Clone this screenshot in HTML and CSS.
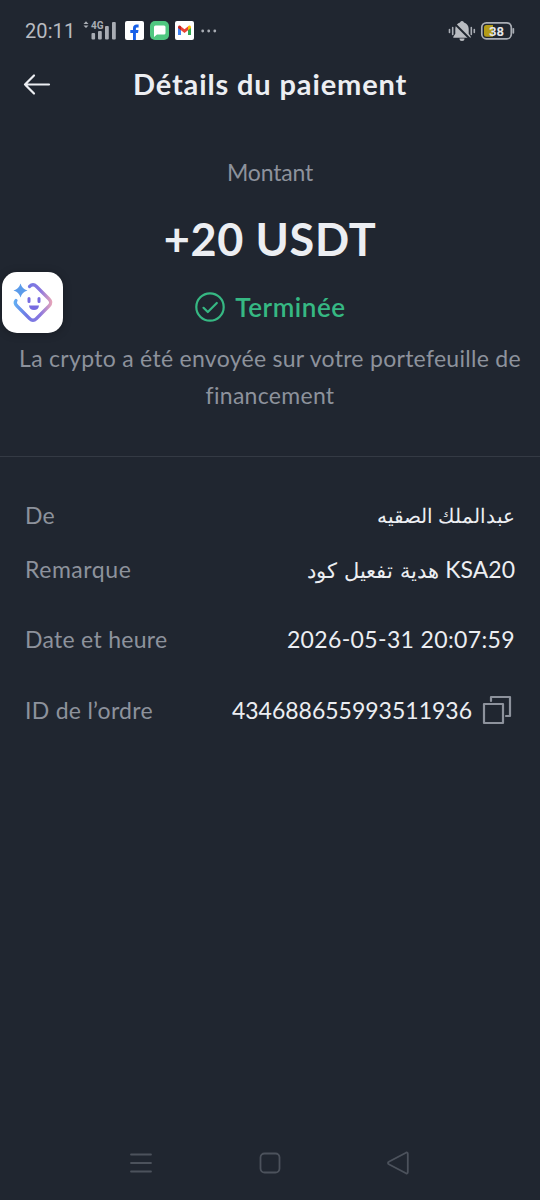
FILE: index.html
```html
<!DOCTYPE html>
<html lang="fr">
<head>
<meta charset="utf-8">
<title>Détails du paiement</title>
<link rel="stylesheet" href="styles.css">
</head>
<body>
<div class="screen">
  <div class="status">
    <span class="clock">20:11</span>
    <svg class="signal" width="34" height="22" viewBox="0 0 34 22" fill="#a9adb4">
      <path d="M3 1.200 5.500 4H.5zM3 8 .5 5.400h5z"/>
      <text x="8" y="9" class="net">4G</text>
      <rect x="8.500" y="13" width="3.600" height="6.500" rx="1"/><rect x="15" y="11" width="3.800" height="8.500" rx="1"/><rect x="22" y="6" width="3.800" height="13.500" rx="1"/><rect x="29" y="2" width="3.800" height="17.500" rx="1"/>
    </svg>
    <svg class="app" width="19" height="19" viewBox="0 0 19 19"><rect width="19" height="19" rx="2" fill="#fff"/><path d="M8 19v-7H5.300V9H8V7.300C8 4.800 9.500 3.600 11.600 3.600h2v2.800h-1.300c-1 0-1.400.5-1.400 1.300V9h2.600l-.5 3h-2.100v7z" fill="#1760e8"/></svg>
    <svg class="app" width="19" height="19" viewBox="0 0 19 19"><rect width="19" height="19" rx="5" fill="#4fc780"/><path d="M5.500 4.500h8.500a1.500 1.500 0 0 1 1.500 1.500v6a1.500 1.500 0 0 1-1.500 1.500H7L4 16V6a1.500 1.500 0 0 1 1.500-1.500z" fill="#fff"/></svg>
    <svg class="app" width="19" height="19" viewBox="0 0 19 19"><rect width="19" height="19" rx="2" fill="#fff"/><path d="M3 6v8h3V8z" fill="#4285f4"/><path d="M13 8v6h3V6z" fill="#34a853"/><path d="M6 5.500 9.500 8.300 13 5.500v3.700l-3.500 2.700L6 9.200z" fill="#ea4335"/><path d="M3 6.200C3 4.500 4.800 4 6 5.200v4L3 7z" fill="#c5221f"/><path d="M16 6.200c0-1.700-1.800-2.200-3-1v4L16 7z" fill="#fbbc04"/></svg>
    <svg class="more" width="16" height="4" viewBox="0 0 16 4" fill="#a9adb4"><circle cx="1.700" cy="2" r="1.400"/><circle cx="7.700" cy="2" r="1.400"/><circle cx="13.800" cy="2" r="1.400"/></svg>
    <svg class="mute" width="28" height="22" viewBox="0 0 28 22">
      <path d="M14 1a2 2 0 0 1 2 1.500c3 1 4.700 3.300 4.700 6.200v5l2 3v1H5.300v-1l2-3v-5C7.300 5.800 9 3.500 12 2.500A2 2 0 0 1 14 1zM11.500 18.500h5a2.500 2.500 0 0 1-5 0z" fill="#b9bcc1"/>
      <path d="M1.500 9.500v3M4.700 7.500v7M23.300 7.500v7M26.300 9.500v3" stroke="#a9adb4" stroke-width="1.600" stroke-linecap="round"/>
      <path d="M6 3 22 19" stroke="#202630" stroke-width="1.900"/>
    </svg>
    <svg class="battery" width="35" height="20" viewBox="0 0 35 20">
      <rect x="1.800" y="1.800" width="29.500" height="16" rx="4.500" fill="none" stroke="#a9adb4" stroke-width="1.700"/>
      <path d="M6.500 4H13v11.700H6.500A2.500 2.500 0 0 1 4 13.200V6.500A2.500 2.500 0 0 1 6.500 4z" fill="#b39b17"/>
      <path d="M33.300 7.800v4" stroke="#a9adb4" stroke-width="1.800" stroke-linecap="round"/>
      <text x="16.500" y="14.500" class="level">38</text>
    </svg>
  </div>

  <header class="header">
    <svg class="back" width="28" height="24" viewBox="0 0 28 24" fill="none" stroke="#eceef2" stroke-width="2.200" stroke-linecap="round" stroke-linejoin="round"><path d="M26 12.500H2M11 3.500 2 12.500l9 9"/></svg>
    <h1 class="title">Détails du paiement</h1>
  </header>

  <section class="summary">
    <div class="caption">Montant</div>
    <div class="amount">+20 USDT</div>
    <div class="state">
      <svg width="32" height="32" viewBox="0 0 32 32" fill="none" stroke="#36b883" stroke-width="2.200" stroke-linecap="round" stroke-linejoin="round"><circle cx="16" cy="16" r="13.700"/><path d="m9.500 16.800 4.300 4.200 9-9"/></svg>
      <span class="state-text">Terminée</span>
    </div>
    <p class="note">La crypto a été envoyée sur votre portefeuille de<br>financement</p>
  </section>

  <dl class="details">
    <div class="row"><dt>De</dt><dd class="v-from" lang="ar">عبدالملك الصقيه</dd></div>
    <div class="row row-remark"><dt class="k-remark">Remarque</dt><dd><span class="ar" lang="ar">هدية تفعيل كود</span> <span>KSA20</span></dd></div>
    <div class="row row-date"><dt>Date et heure</dt><dd class="v-date">2026<span class="dash">-</span>05<span class="dash">-</span>31 20:07:59</dd></div>
    <div class="row row-id"><dt>ID de l’ordre</dt><dd>434688655993511936</dd>
      <svg class="copy" width="30" height="30" viewBox="0 0 30 30" fill="none" stroke="#8d929c" stroke-width="2.200" stroke-linejoin="round" stroke-linecap="round"><rect x="2" y="9" width="19" height="19"/><path d="M9 6V2h19v19h-4"/></svg>
    </div>
  </dl>

  <nav class="nav">
    <svg width="24" height="24" viewBox="0 0 24 24"><path d="M2 3.500h20M2 12h20M2 20.500h20"/></svg>
    <svg width="24" height="24" viewBox="0 0 24 24"><rect x="2.500" y="2.500" width="19" height="19" rx="4"/></svg>
    <svg width="24" height="24" viewBox="0 0 24 24"><path d="M20 1.700 2.800 10.800a1.300 1.300 0 0 0 0 2.400L20 22.300q1.800.7 1.800-1.300V3q0-2-1.800-1.300z"/></svg>
  </nav>

  <div class="assistant">
    <svg width="61" height="61" viewBox="0 0 61 61" fill="none">
      <defs><linearGradient id="g" x1="11" y1="30" x2="50" y2="30" gradientUnits="userSpaceOnUse"><stop offset="0" stop-color="#60b4f5"/><stop offset=".35" stop-color="#7078e4"/><stop offset=".7" stop-color="#8a77e0"/><stop offset="1" stop-color="#e8a5b8"/></linearGradient></defs>
      <path d="M27.500 14.500q3.500-3.500 7 0L47 27q3.500 3.500 0 7L34.500 46.500q-3.500 3.500-7 0L15 34q-3-3-1-5.500" stroke="url(#g)" stroke-width="3.200" stroke-linecap="round"/>
      <path d="M18.500 11.500q1.500 5.500 7 7-5.500 1.500-7 7-1.500-5.500-7-7 5.500-1.500 7-7z" fill="#5b9bea"/>
      <path d="M27 26.500v3M37 26.500v3" stroke="#776be0" stroke-width="3" stroke-linecap="round"/>
      <path d="M27 33.500h10q-.5 4.500-5 4.500t-5-4.500z" fill="#776be0"/>
    </svg>
  </div>
</div>
</body>
</html>
```
FILE: styles.css
```css
* { box-sizing: border-box; margin: 0; padding: 0; }
body { background: #202630; }
svg { display: block; flex: none; }
.screen {
  position: relative;
  display: flex;
  flex-direction: column;
  width: 540px;
  height: 1200px;
  overflow: hidden;
  background: #202630;
  color: #eceef2;
  font-family: Lato, "Noto Sans", sans-serif;
}
.status { display: flex; align-items: center; height: 60px; padding: 1px 26px 0 25px; }
.clock { width: 51px; font: 400 20px/24px Roboto, sans-serif; letter-spacing: .1px; color: #b8bbc0; }
.signal { margin-left: 7px; }
.net { font: 700 10px Roboto, sans-serif; }
.app { margin-left: 6px; }
.signal + .app { margin-left: 8px; }
.more { margin-left: 7px; }
.mute { margin-left: auto; }
.battery { margin: 0 -1px 0 4px; }
.level { font: 700 13px Roboto, sans-serif; fill: #e6e7e9; text-anchor: middle; }

.header { display: flex; align-items: center; height: 48px; padding-left: 23px; }
.title { width: 276px; margin: -1px 0 0 82px; font-size: 29px; line-height: 40px; font-weight: 700; letter-spacing: .87px; white-space: nowrap; }

.summary { display: flex; flex-direction: column; align-items: center; height: 349px; padding-top: 49px; border-bottom: 1px solid #343a44; text-align: center; white-space: nowrap; }
.caption { font-size: 23px; line-height: 30px; letter-spacing: -.2px; color: #8d929c; }
.amount { margin-top: 20px; font-size: 45px; line-height: 64px; font-weight: 700; letter-spacing: .65px; }
.state { display: flex; align-items: center; gap: 9px; margin-top: 20px; height: 32px; }
.state-text { font-size: 26px; line-height: 32px; font-weight: 600; letter-spacing: .55px; color: #36b883; }
.note { margin-top: 17px; font-size: 23px; line-height: 37px; letter-spacing: .29px; color: #8d929c; }

.details { display: flex; flex-direction: column; padding: 40px 25px 0; font-size: 23px; line-height: 36px; white-space: nowrap; }
.row { display: flex; align-items: center; height: 36px; }
.row dt { margin: -1px auto 0 0; letter-spacing: .28px; color: #8d929c; }
.row .k-remark { letter-spacing: .55px; }
.v-from { font-size: 20.200px; }
.ar { font-size: 21.400px; word-spacing: 1.500px; }
.v-date { margin-top: -2px; letter-spacing: .36px; }
.dash { vertical-align: 1px; }
.row-remark { margin-top: 18px; }
.row-date { margin-top: 34px; }
.row-id { margin-top: 35px; }
.copy { margin: 0 3px 0 10px; }

.nav { display: flex; justify-content: space-between; margin-top: auto; height: 49px; padding: 0 130px 0 129px; }
.nav svg { fill: none; stroke: #4c525c; stroke-width: 1.800; stroke-linejoin: round; stroke-linecap: round; }

.assistant { position: absolute; left: 2px; top: 272px; width: 61px; height: 61px; border-radius: 15px; background: #fff; box-shadow: 0 1px 8px rgba(0, 0, 0, .25); }
```
